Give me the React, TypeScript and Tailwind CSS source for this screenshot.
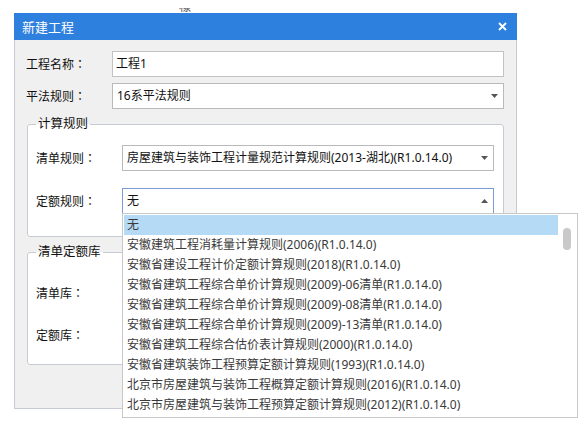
const items = [
  "无",
  "安徽建筑工程消耗量计算规则(2006)(R1.0.14.0)",
  "安徽省建设工程计价定额计算规则(2018)(R1.0.14.0)",
  "安徽省建筑工程综合单价计算规则(2009)-06清单(R1.0.14.0)",
  "安徽省建筑工程综合单价计算规则(2009)-08清单(R1.0.14.0)",
  "安徽省建筑工程综合单价计算规则(2009)-13清单(R1.0.14.0)",
  "安徽省建筑工程综合估价表计算规则(2000)(R1.0.14.0)",
  "安徽省建筑装饰工程预算定额计算规则(1993)(R1.0.14.0)",
  "北京市房屋建筑与装饰工程概算定额计算规则(2016)(R1.0.14.0)",
  "北京市房屋建筑与装饰工程预算定额计算规则(2012)(R1.0.14.0)",
];

function Caret({ up }: { up?: boolean }) {
  return (
    <svg width="7" height="4" viewBox="0 0 7 4" className="shrink-0">
      {up ? <path d="M0 4 L3.5 0 L7 4 Z" fill="#555" /> : <path d="M0 0 L7 0 L3.5 4 Z" fill="#555" />}
    </svg>
  );
}

// fullwidth colon drawn centred, as in the original UI font
function Label({ text }: { text: string }) {
  return (
    <span className="w-[86px] shrink-0 text-[#111]">
      {text}
      <span style={{ fontFamily: '"Noto Sans CJK TC", sans-serif' }}>：</span>
    </span>
  );
}

export default function App() {
  return (
    <div
      className="relative w-[587px] h-[437px] bg-white overflow-hidden text-[12px] leading-[16px]"
      style={{ fontFamily: '"Noto Sans", "Noto Sans CJK SC", sans-serif' }}
    >
      {/* bit of text peeking from behind the dialog */}
      <div className="absolute left-[179px] top-[8px] h-[5px] w-[14px] overflow-hidden">
        <span className="block -mt-[8px] text-[12px] leading-[14px] text-[#555]">樣</span>
      </div>

      <div className="ml-[14px] mt-[13px] w-[503px] h-[396px] flex flex-col border-x border-b border-[#c6cbd3] bg-[#f0f0f0]">
        <div className="h-[27px] -mx-px bg-[#2e80df] flex items-center justify-between pl-[8px] pr-[10px] text-white text-[13px]">
          <span>新建工程</span>
          <svg width="9" height="9" viewBox="0 0 9 9">
            <path d="M1 1 L8 8 M8 1 L1 8" stroke="white" strokeWidth="1.8" />
          </svg>
        </div>

        <div className="flex flex-col pt-[11px] pl-[11px] pr-[12px]">
          <div className="flex items-center">
            <Label text="工程名称" />
            <div className="flex-1 h-[26px] border border-[#c3c3c3] bg-white flex items-center px-[3px] text-[#111]">
              工程1
            </div>
          </div>
          <div className="flex items-center mt-[6px]">
            <Label text="平法规则" />
            <div className="flex-1 h-[26px] border border-[#b9b9b9] bg-white flex items-center justify-between pl-[4px] pr-[5px] text-[#111]">
              <span>16系平法规则</span>
              <Caret />
            </div>
          </div>

          <fieldset className="mt-[7px] ml-[1px] border border-[#c6cbd3] rounded-[3px] bg-white pl-[8px] pr-[9px] pt-[13px] pb-[22px]">
            <legend className="px-[2px] leading-[16px] text-[#111] text-[12.5px]">计算规则</legend>
            <div className="flex items-center">
              <Label text="清单规则" />
              <div className="flex-1 h-[26px] border border-[#b9b9b9] bg-white flex items-center justify-between pl-[4px] pr-[5px] text-[#111]">
                <span>房屋建筑与装饰工程计量规范计算规则(2013-湖北)(R1.0.14.0)</span>
                <Caret />
              </div>
            </div>
            <div className="flex items-center mt-[17px]">
              <Label text="定额规则" />
              <div className="flex-1 h-[26px] border border-[#7b9bd9] bg-white flex items-center justify-between pl-[4px] pr-[5px] text-[#111]">
                <span>无</span>
                <Caret up />
              </div>
            </div>
          </fieldset>

          <fieldset className="mt-[7px] ml-[1px] h-[121px] border border-[#c6cbd3] rounded-[3px] bg-white pl-[8px] pr-[9px] pt-[20px]">
            <legend className="px-[2px] leading-[16px] text-[#111] text-[12.5px]">清单定额库</legend>
            <div className="flex items-center h-[26px]">
              <Label text="清单库" />
            </div>
            <div className="flex items-center h-[26px] mt-[16px]">
              <Label text="定额库" />
            </div>
          </fieldset>
        </div>
      </div>

      {/* open dropdown list */}
      <div className="absolute left-[122px] top-[213px] w-[456px] h-[205px] border border-[#c8c8c8] bg-white flex p-[1px]">
        <div className="flex-1 flex flex-col text-[#3a3a3a]">
          {items.map((t, i) => (
            <div
              key={i}
              className={`h-[20px] flex items-center pl-[3px] whitespace-nowrap ${i === 0 ? "bg-[#b4daf5]" : ""}`}
            >
              {t}
            </div>
          ))}
        </div>
        <div className="w-[18px] flex justify-center pt-[13px]">
          <div className="w-[8px] h-[22px] rounded-full bg-[#c9c9c9]" />
        </div>
      </div>
    </div>
  );
}
